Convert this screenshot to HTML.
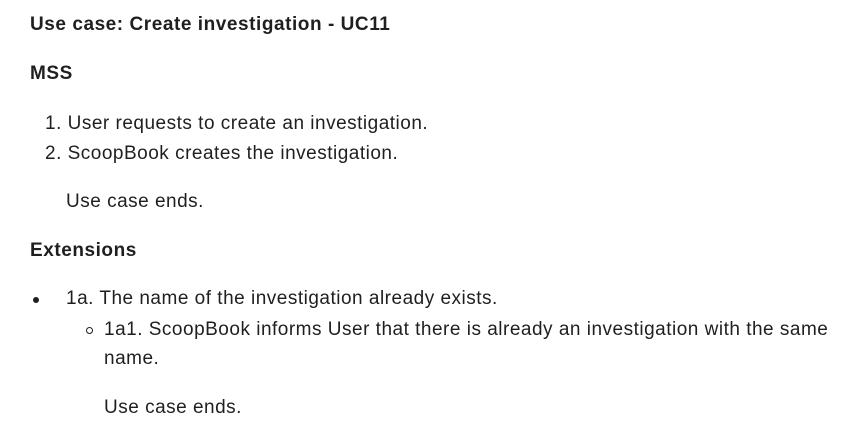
<html><head><style>
body{margin:0;width:862px;height:427px;background:#fff;font-family:"Liberation Sans",sans-serif;font-size:19px;letter-spacing:0.5px;color:#1f1f1f;position:relative;overflow:hidden}
div{position:absolute;line-height:18px;white-space:nowrap}
.b{font-weight:bold;letter-spacing:0.55px}
.dot{width:6px;height:6px;border-radius:50%;background:#1f1f1f}
.circ{width:5px;height:5px;border-radius:50%;border:1.3px solid #1f1f1f}
</style></head><body>
<div class="b" style="left:30px;top:16px">Use case: Create investigation - UC11</div>
<div class="b" style="left:30px;top:65px">MSS</div>
<div style="left:45px;top:115px">1. User requests to create an investigation.</div>
<div style="left:45px;top:145px">2. ScoopBook creates the investigation.</div>
<div style="left:66px;top:193px">Use case ends.</div>
<div class="b" style="left:30px;top:242px">Extensions</div>
<div class="dot" style="left:33px;top:297px"></div>
<div style="left:66px;top:290px">1a. The name of the investigation already exists.</div>
<div class="circ" style="left:86px;top:327px"></div>
<div style="left:104px;top:321px">1a1. ScoopBook informs User that there is already an investigation with the same</div>
<div style="left:104px;top:350px">name.</div>
<div style="left:104px;top:399px">Use case ends.</div>
</body></html>
